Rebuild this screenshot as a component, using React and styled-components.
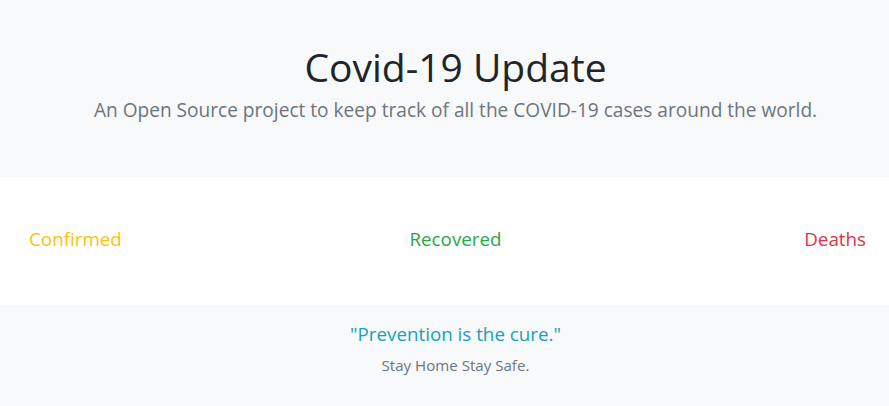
import React from "react";
import styled, { createGlobalStyle } from "styled-components";

const Global = createGlobalStyle`
  html, body { margin: 0; padding: 0; overflow: hidden; background: #f8f9fa; }
  body { font-family: "Segoe UI", "Open Sans", "Noto Sans", sans-serif; }
`;

const Page = styled.div`
  width: 911px;
`;

const Hero = styled.header`
  background: #f8f9fa;
  height: 177px;
  box-sizing: border-box;
  padding-top: 43px;
  text-align: center;
`;

const Title = styled.h1`
  margin: 0;
  font-size: 39px;
  font-weight: 400;
  line-height: 48px;
  color: #212529;
`;

const Lead = styled.p`
  margin: 4px 0 0;
  font-size: 19.1px;
  font-weight: 400;
  line-height: 30px;
  color: #6c757d;
`;

const Stats = styled.section`
  background: #fff;
  height: 128px;
  display: grid;
  grid-template-columns: repeat(3, 1fr);
  align-items: center;
`;

const Stat = styled.div`
  font-size: 18.8px;
  color: ${(p) => p.color};
  text-align: ${(p) => p.align};
  padding: 0 ${(p) => p.padRight}px 5px ${(p) => p.padLeft}px;
`;

const Footer = styled.footer`
  background: #f8f9fa;
  height: 101px;
  box-sizing: border-box;
  padding-top: 14px;
  text-align: center;
`;

const Quote = styled.p`
  margin: 0;
  font-size: 18.8px;
  line-height: 30px;
  color: #17a2b8;
`;

const Tag = styled.p`
  margin: 4px 0 0;
  font-size: 15.1px;
  line-height: 24px;
  color: #6c757d;
`;

export default function App() {
  return (
    <Page>
      <Global />
      <Hero>
        <Title>Covid-19 Update</Title>
        <Lead>An Open Source project to keep track of all the COVID-19 cases around the world.</Lead>
      </Hero>
      <Stats>
        <Stat color="#ffc107" align="left" padLeft={29} padRight={0}>Confirmed</Stat>
        <Stat color="#28a745" align="center" padLeft={0} padRight={0}>Recovered</Stat>
        <Stat color="#dc3545" align="right" padLeft={0} padRight={45}>Deaths</Stat>
      </Stats>
      <Footer>
        <Quote>"Prevention is the cure."</Quote>
        <Tag>Stay Home Stay Safe.</Tag>
      </Footer>
    </Page>
  );
}
